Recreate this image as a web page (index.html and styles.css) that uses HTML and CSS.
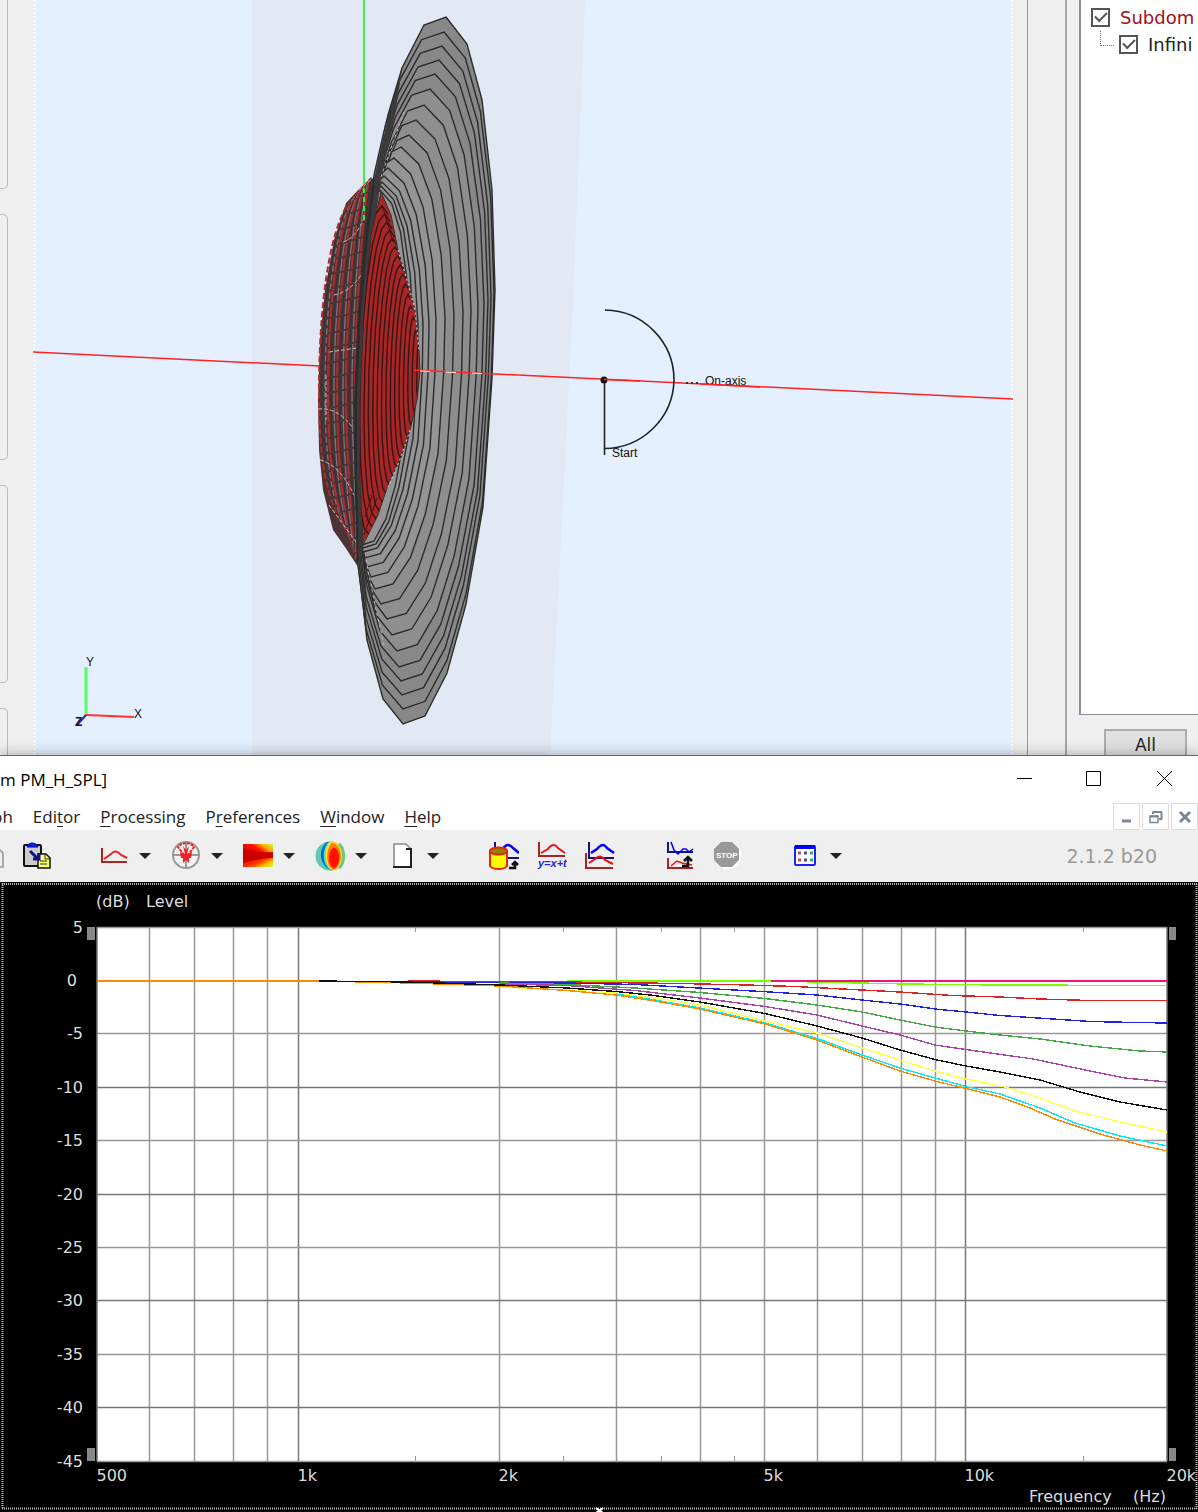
FILE: index.html
```html
<!DOCTYPE html>
<html lang="en">
<head>
  <meta charset="UTF-8" />
  <meta name="viewport" content="width=device-width, initial-scale=1.0"/>
  <title>PM_H_SPL</title>
  <link rel="stylesheet" href="styles.css">
</head>
<body>
  <!-- 3D model window -->
  <div class="model">
    <div class="side">
      <div class="box box-top"></div>
      <div class="box box-tall"></div>
      <div class="box box-mid"></div>
      <div class="box box-last"></div>
    </div>

    <div class="view">
      <svg viewBox="33 0 980 755" role="img" aria-label="3D view">
        <polygon points="252,0 585,0 573,300 550,755 252,755" fill="#e2e8f4"/>
        <path d="M34.500 0V755M1012 0V755" stroke="#fff" stroke-width="1.500" stroke-dasharray="2 2"/>
        <path d="M364 0V190" stroke="#4e4" stroke-width="2"/>
        <path d="M32 352L320 366" stroke="#f22" stroke-width="1.5"/>
        <g id="back"></g>
        <g id="horn"></g>
        <g id="dome"></g>
        <path d="M364 188V220" stroke="#3e3" stroke-width="2" stroke-dasharray="5 4"/>
        <path d="M414 370L1014 399" stroke="#f22" stroke-width="1.5"/>
        <path d="M420 371L492 374" stroke="#fff" stroke-width="1" stroke-dasharray="10 16"/>
        <!-- observation arc -->
        <path d="M605 310A70 70 0 0 1 674 380A70 70 0 0 1 604 448.500M604.500 380V455" fill="none" stroke="#222" stroke-width="1.600"/>
        <circle cx="604" cy="380" r="3.500" fill="#111"/>
        <path d="M604 379.500L640 381" stroke="#f22" stroke-width="1.500"/>
        <path d="M686 383H698" stroke="#333" stroke-width="2" stroke-dasharray="2 3"/>
        <text class="tag" x="612" y="457">Start</text>
        <text class="tag" x="705" y="385">On-axis</text>
        <path d="M700 384L760 387" stroke="#f22" stroke-width="1.500"/>
        <!-- axes -->
        <path d="M86 667V715" stroke="#5f6" stroke-width="3"/>
        <path d="M86 715L134 717" stroke="#f33" stroke-width="2"/>
        <path d="M86 715L77 725" stroke="#22d" stroke-width="2"/>
        <text class="tag" x="86" y="666">Y</text>
        <text class="tag" x="134" y="718">X</text>
        <text class="tag tag-bold" x="75" y="726">Z</text>
      </svg>
    </div>

    <div class="split"></div>

    <div class="panel">
      <div class="tree">
        <label class="node red"><input type="checkbox" checked>Subdom</label>
        <label class="node child"><input type="checkbox" checked>Infini</label>
      </div>
      <button class="all">All</button>
    </div>
  </div>

  <!-- graph window -->
  <div class="window">
    <div class="titlebar">
      <span class="title">m PM_H_SPL]</span>
      <button class="win" aria-label="Minimize"><svg width="16" height="16" viewBox="0 0 16 16"><path d="M1 7.500H16"/></svg></button>
      <button class="win" aria-label="Maximize"><svg width="16" height="16" viewBox="0 0 16 16"><path d="M.5 .5H14.500V14.500H.5Z"/></svg></button>
      <button class="win" aria-label="Close"><svg width="16" height="16" viewBox="0 0 16 16"><path d="M1 0L16 15M16 0L1 15"/></svg></button>
    </div>

    <div class="menubar">
      <nav class="menu">
        <button>ph</button>
        <button>Edi<u>t</u>or</button>
        <button><u>P</u>rocessing</button>
        <button>P<u>r</u>eferences</button>
        <button><u>W</u>indow</button>
        <button><u>H</u>elp</button>
      </nav>
      <div class="mdi">
        <button aria-label="Minimize graph"><svg width="14" height="14" viewBox="0 0 14 14"><path d="M2 11H11" stroke-width="3"/></svg></button>
        <button aria-label="Restore graph"><svg width="14" height="14" viewBox="0 0 14 14"><path d="M1 6H9V12.500H1Z" stroke-width="1.500"/><path d="M1 6.500H9M4 2H13M4 4V1.500M12.500 2V9H10" stroke-width="2"/></svg></button>
        <button aria-label="Close graph"><svg width="14" height="14" viewBox="0 0 14 14"><path d="M2 2L12 12M12 2L2 12" stroke-width="3"/></svg></button>
      </div>
    </div>

    <div class="toolbar">
      <button class="tool" aria-label="Copy">
        <svg width="30" height="30" viewBox="0 0 30 30"><path d="M20 9H26L29 12V26H20Z" fill="#eee" stroke="#aaa" stroke-width="2"/><path d="M24 14V22" stroke="#aaa" stroke-width="2"/></svg>
      </button>
      <button class="tool" aria-label="Paste">
        <svg width="30" height="30" viewBox="0 0 30 30">
          <rect x="2" y="4" width="17" height="21" rx="1" fill="#ccc" stroke="#111" stroke-width="2"/>
          <path d="M5 6C6 3 8 2 10 2S15 3 16 6Z" fill="#02f" stroke="#00a"/>
          <path d="M16 13H24L28 17V27H16Z" fill="#ff6" stroke="#111" stroke-width="1.500"/>
          <path d="M23 13V18H28M18 20H25M18 23H25" fill="none" stroke="#333"/>
          <path d="M8 10L16 18M11 18H17V12" fill="none" stroke="#118" stroke-width="3"/>
        </svg>
      </button>
      <span class="sep sep-a"></span>
      <button class="tool drop" aria-label="Level graph">
        <svg width="30" height="30" viewBox="0 0 30 30"><path d="M3 7V21H28" fill="none" stroke="#a22" stroke-width="2"/><path d="M5 18L12 13C15 9 19 10 22 14L28 17" fill="none" stroke="#e22" stroke-width="2"/></svg>
        <svg class="arrow" width="12" height="8" viewBox="0 0 12 8"><path d="M0 1H12L6 7Z"/></svg>
      </button>
      <button class="tool drop" aria-label="Polar graph">
        <svg width="30" height="30" viewBox="0 0 30 30">
          <circle cx="15" cy="14" r="13" fill="#f4f4f4" stroke="#999" stroke-width="2"/>
          <path d="M15 0V28M1 14H29" stroke="#999" stroke-width="2"/>
          <path d="M13 14L7 6C10 1 20 1 23 6L17 14" fill="none" stroke="#e22" stroke-width="2" stroke-dasharray="3 1"/>
          <path d="M9 11L14 13L12 5L15 9L18 5L16 13L21 11L20 17L18 17L18 22L15 19L12 22L12 17L10 17Z" fill="#e22"/>
        </svg>
        <svg class="arrow" width="12" height="8" viewBox="0 0 12 8"><path d="M0 1H12L6 7Z"/></svg>
      </button>
      <button class="tool drop" aria-label="Contour graph">
        <svg width="30" height="30" viewBox="0 0 30 30">
          <defs>
            <linearGradient id="heat" x1="0" y1=".6" x2="1" y2="0"><stop offset="0" stop-color="#d00"/><stop offset=".45" stop-color="#f10"/><stop offset=".7" stop-color="#fa0"/><stop offset="1" stop-color="#bf4"/></linearGradient>
            <linearGradient id="heat2" x1="0" y1=".2" x2="1" y2="1"><stop offset="0" stop-color="#d00"/><stop offset=".5" stop-color="#f30"/><stop offset=".75" stop-color="#fb0"/><stop offset="1" stop-color="#cf4"/></linearGradient>
          </defs>
          <rect y="3" width="30" height="12" fill="url(#heat)"/>
          <rect y="14" width="30" height="12" fill="url(#heat2)"/>
          <path d="M0 7C8 9 16 12 30 11V17C18 17 10 20 0 22Z" fill="#c00"/>
        </svg>
        <svg class="arrow" width="12" height="8" viewBox="0 0 12 8"><path d="M0 1H12L6 7Z"/></svg>
      </button>
      <button class="tool drop" aria-label="Balloon graph">
        <svg width="30" height="30" viewBox="0 0 30 30">
          <circle cx="15" cy="15" r="14.500" fill="#5ec9b4"/>
          <path d="M12 1A14.500 14.500 0 0 1 16 29.500C4 24 3 8 12 1Z" fill="#06c"/>
          <path d="M14 .5A14.500 14.500 0 0 1 16 29.500C7 24 6 8 14 .5Z" fill="#4dc"/>
          <path d="M15 .5A14.500 14.500 0 0 1 17 29.500C9 24 8 8 15 .5Z" fill="#fd2"/>
          <path d="M17 2C29 4 28 26 18 29C10 24 11 7 17 2Z" fill="#f70"/>
          <ellipse cx="19" cy="17" rx="5" ry="10" fill="#f10"/>
          <path d="M24 3C30 8 30 22 24 27" fill="none" stroke="#6c8" stroke-width="3"/>
        </svg>
        <svg class="arrow" width="12" height="8" viewBox="0 0 12 8"><path d="M0 1H12L6 7Z"/></svg>
      </button>
      <button class="tool drop" aria-label="New page">
        <svg width="30" height="30" viewBox="0 0 30 30"><path d="M7 3H19L24 8V26H7Z" fill="#fff"/><path d="M7 26V3H19L24 8" fill="none" stroke="#888" stroke-width="1.500"/><path d="M6 26H24V8H19" fill="none" stroke="#222" stroke-width="2"/></svg>
        <svg class="arrow" width="12" height="8" viewBox="0 0 12 8"><path d="M0 1H12L6 7Z"/></svg>
      </button>
      <span class="sep sep-b"></span>
      <button class="tool" aria-label="Store curves">
        <svg width="30" height="30" viewBox="0 0 30 30">
          <path d="M6 1V17H30" fill="none" stroke="#118" stroke-width="2"/>
          <path d="M12 10C17 3 20 2 24 7L30 12" fill="none" stroke="#00e" stroke-width="2.500"/>
          <path d="M1 10V25C4 29 15 29 18 25V10Z" fill="#ff0" stroke="#e20" stroke-width="2"/>
          <ellipse cx="9.500" cy="10" rx="8.500" ry="3.500" fill="#880" stroke="#e20" stroke-width="2"/>
          <path d="M20 27H26V21M23 24L26 21L29 24" fill="none" stroke="#111" stroke-width="2.500"/>
        </svg>
      </button>
      <button class="tool" aria-label="Formula">
        <svg width="30" height="30" viewBox="0 0 30 30">
          <path d="M2 1V15H28" fill="none" stroke="#a22" stroke-width="2"/>
          <path d="M4 12L11 8C14 3 18 3 21 7L28 12" fill="none" stroke="#e11" stroke-width="2"/>
          <text x="1" y="26" class="formula">y=x+t</text>
        </svg>
      </button>
      <button class="tool" aria-label="Overlay curves">
        <svg width="30" height="30" viewBox="0 0 30 30">
          <path d="M4 1V17H29" fill="none" stroke="#118" stroke-width="2"/>
          <path d="M6 12L12 8C16 3 19 3 22 7L29 12" fill="none" stroke="#00e" stroke-width="2.500"/>
          <path d="M1 12V27H28" fill="none" stroke="#a22" stroke-width="2"/>
          <path d="M4 22L10 18C14 14 17 15 20 19L28 23" fill="none" stroke="#e11" stroke-width="2"/>
        </svg>
      </button>
      <span class="sep sep-c"></span>
      <button class="tool" aria-label="Transform">
        <svg width="30" height="30" viewBox="0 0 30 30">
          <path d="M3 1V11H28" fill="none" stroke="#118" stroke-width="2"/>
          <path d="M6 1L9 9L13 13L18 8H21L24 11L28 8" fill="none" stroke="#00e" stroke-width="1.500"/>
          <path d="M3 17V27H28" fill="none" stroke="#a22" stroke-width="2"/>
          <path d="M6 25L12 20L17 22L27 24" fill="none" stroke="#e11" stroke-width="1.500"/>
          <path d="M17 25H23V16M19 20L23 16L27 20" fill="none" stroke="#111" stroke-width="2.500"/>
        </svg>
      </button>
      <button class="tool" aria-label="Stop">
        <svg width="30" height="30" viewBox="0 0 30 30">
          <path d="M10 3H20L28 10V20L20 28H10Z" fill="#fff"/>
          <path d="M8 1H19L26 8V19L19 26H8L1 19V8Z" fill="#999"/>
          <text x="3" y="17" class="stop">STOP</text>
        </svg>
      </button>
      <span class="sep sep-d"></span>
      <button class="tool drop" aria-label="Layout">
        <svg width="30" height="30" viewBox="0 0 30 30">
          <rect x="5" y="5" width="20" height="19" rx="1" fill="#fff" stroke="#22e" stroke-width="2"/>
          <path d="M5 6H25" stroke="#00f" stroke-width="4"/>
          <path d="M8 12H11M8 19H11" stroke="#a56" stroke-width="3"/>
          <path d="M14 12H17M14 19H17" stroke="#648" stroke-width="3"/>
          <path d="M20 12H23M20 19H23" stroke="#3a8" stroke-width="3"/>
        </svg>
        <svg class="arrow" width="12" height="8" viewBox="0 0 12 8"><path d="M0 1H12L6 7Z"/></svg>
      </button>
      <span class="version">2.1.2 b20</span>
    </div>

    <div class="chart">
      <svg viewBox="0 882 1198 630" role="img" aria-label="Level over frequency">
        <path class="focus" d="M2 884H1198M2.500 883V1509M1196.500 884V1509M2 1508.500H1198"/>
        <rect x="97" y="927" width="1070" height="534" fill="#fff"/>
        <g id="grid"></g>
        <g id="curves"></g>
        <path d="M87 927H95V940H87ZM1169 927H1176V940H1169ZM87 1448H95V1461H87ZM1169 1448H1176V1461H1169Z" fill="#888"/>
        <g id="labels"></g>
        <text x="96" y="907">(dB)</text>
        <text x="146" y="907">Level</text>
        <text x="1029" y="1502">Frequency</text>
        <text x="1166" y="1502" text-anchor="end">(Hz)</text>
        <path d="M596 1508L603 1513M603 1508L596 1513" stroke="#fff" stroke-width="2"/>
      </svg>
    </div>
  </div>

  <script src="script.js"></script>
</body>
</html>
```

FILE: styles.css
```css
html, body {
  margin: 0;
  padding: 0;
  background: #efefef;
  color: #222;
  font-family: "Open Sans", "Noto Sans", sans-serif;
  font-size: 17px;
}

body {
  overflow: hidden;
}

button {
  font: inherit;
  color: inherit;
  background: none;
  border: none;
  margin: 0;
  padding: 0;
}

svg {
  display: block;
}

/* model window */
.model {
  display: flex;
}

.side {
  width: 33px;
  display: flex;
  flex-direction: column;
  gap: 25px;
}

.box {
  box-sizing: border-box;
  width: 8px;
  border: 1px solid #bbb;
  border-left: none;
  border-radius: 0 5px 5px 0;
}

.box-top {
  height: 189px;
  border-top: none;
  border-top-right-radius: 0;
}

.box-tall {
  height: 246px;
}

.box-mid {
  height: 198px;
}

.box-last {
  flex: 1;
  border-bottom: none;
  border-bottom-right-radius: 0;
}

.view {
  flex: 1;
  background: #e4f0ff;
}

.view svg {
  width: 100%;
  height: auto;
}

.tag {
  font-family: "Liberation Sans", Arial, sans-serif;
  font-size: 12px;
  fill: #111;
}

.tag-bold {
  font-weight: bold;
}

.split {
  box-sizing: border-box;
  width: 40px;
  margin-left: 14px;
  border-left: 1px solid #999;
  border-right: 2px solid #a4a8ac;
}

.panel {
  width: 119px;
  margin-left: 12px;
  display: flex;
  flex-direction: column;
  overflow: hidden;
}

.tree {
  flex: 1;
  background: #fff;
  border-left: 2px solid #888c94;
  border-bottom: 1px solid #888c94;
  padding: 4px 0 0 10px;
  font-family: "DejaVu Sans", Verdana, sans-serif;
  font-size: 18px;
}

.node {
  display: flex;
  align-items: center;
  gap: 10px;
  height: 27px;
  white-space: nowrap;
}

.node.red {
  color: #a01020;
}

.node.child {
  position: relative;
  padding-left: 28px;
}

.node.child::before {
  content: "";
  position: absolute;
  left: 9px;
  top: 0;
  width: 13px;
  height: 14px;
  border-left: 1px dotted #777;
  border-bottom: 1px dotted #777;
}

.node input {
  appearance: none;
  flex: none;
  box-sizing: border-box;
  width: 19px;
  height: 19px;
  margin: 0;
  border: 2px solid #555;
  background: #fff;
}

.node input:checked::after {
  content: "";
  display: block;
  width: 10px;
  height: 5px;
  margin: 2px 0 0 2px;
  border-left: 2px solid #555;
  border-bottom: 2px solid #555;
  transform: rotate(-45deg);
}

.all {
  height: 26px;
  width: 83px;
  margin: 14px 0 0 25px;
  background: #e1e1e1;
  border: 2px solid #adadad;
  border-bottom: none;
  padding-top: 4px;
  font-family: "DejaVu Sans", Verdana, sans-serif;
  line-height: 20px;
}

/* graph window */
.window {
  position: relative;
  background: #fff;
  border-top: 1px solid #666;
  box-shadow: 0 -2px 12px rgba(0, 0, 0, .25);
}

.titlebar {
  display: flex;
  align-items: center;
  height: 46px;
  margin-right: -1px;
}

.title {
  flex: 1;
  color: #000;
}

.win {
  width: 70px;
  height: 46px;
  display: flex;
  align-items: center;
  justify-content: center;
}

.win path {
  fill: none;
  stroke: #000;
}

.menubar {
  display: flex;
  justify-content: space-between;
  height: 28px;
}

.menu {
  display: flex;
  align-items: center;
  gap: 20px;
  margin-left: -8px;
}

.menu u {
  text-underline-offset: 3px;
}

.mdi {
  display: flex;
  gap: 2px;
  padding-top: 1px;
}

.mdi button {
  box-sizing: border-box;
  width: 27px;
  height: 27px;
  border: 1px solid #ddd;
  display: flex;
  align-items: center;
  justify-content: center;
}

.mdi path {
  fill: none;
  stroke: #789;
}

.toolbar {
  display: flex;
  align-items: center;
  height: 52px;
  background: #efefef;
  padding-left: 13px;
}

.tool {
  flex: none;
  width: 48px;
  height: 48px;
  display: flex;
  align-items: center;
  justify-content: center;
}

.tool:first-child {
  margin-left: -48px;
}

.tool.drop {
  width: 72px;
  justify-content: flex-start;
  gap: 10px;
  padding-left: 6px;
}

.arrow {
  fill: #222;
}

.sep {
  width: 32px;
}

.sep-b {
  width: 27px;
}

.formula {
  font-family: "Liberation Sans", Arial, sans-serif;
  font-size: 11px;
  font-style: italic;
  font-weight: bold;
  fill: #22e;
}

.stop {
  font-family: "Liberation Sans", Arial, sans-serif;
  font-size: 8px;
  font-weight: bold;
  fill: #fff;
}

.version {
  margin-left: auto;
  margin-right: 41px;
  color: #999;
  font-family: "DejaVu Sans", Verdana, sans-serif;
  font-size: 19px;
}

.chart {
  background: #000;
}

.chart svg {
  width: 100%;
  height: auto;
}

.chart text {
  font-family: "DejaVu Sans", Verdana, sans-serif;
  font-size: 16px;
  fill: #ddd;
}

.focus {
  stroke: #bbb;
  stroke-width: 2;
  stroke-dasharray: 1 1;
  fill: none;
}
```

FILE: script.js
```js
const NS = "http://www.w3.org/2000/svg";

function add(parent, name, attrs, text) {
  const el = document.createElementNS(NS, name);
  for (const k in attrs) el.setAttribute(k, attrs[k]);
  if (text) el.textContent = text;
  document.getElementById(parent).appendChild(el);
}

// ---------- horn ----------
const rim = [
  [446, 17], [467, 44], [482, 100], [492, 190], [495, 290], [492, 378], [483, 507],
  [466, 604], [447, 673], [425, 716], [403, 724], [383, 699], [367, 640], [359, 570],
  [357, 480], [357, 400], [361, 310], [368, 235], [377, 165], [388, 115], [402, 68], [424, 25]
];

// top point, bottom point and right edge of every ring
const rings = [
  [446, 17, 403, 724, 495], [444, 32, 403, 709, 494], [442, 46, 402, 695, 491],
  [439, 60, 401, 681, 488], [435, 74, 399, 667, 484], [430, 89, 397, 651, 478],
  [424, 105, 392, 635, 471], [416, 120, 387, 619, 463], [409, 135, 381, 604, 454],
  [401, 147, 375, 589, 445], [394, 158, 371, 577, 436], [388, 168, 367, 567, 429],
  [384, 176, 365, 558, 423], [382, 182, 363, 552, 418], [381, 186, 363, 548, 413],
  [380, 190, 362, 545, 409]
];

rings.forEach((r, i) => {
  const [tx, ty, bx, by, right] = r;
  const pts = rim.map(([x, y]) => {
    const k = (y - 17) / 707;
    const axis = 446 - 43 * k;
    const t = (x - axis) / (x > axis ? 65.6 : 63);
    const mid = tx + (bx - tx) * 0.386;
    const half = x > axis ? right - mid : (tx + bx) / 2 - 359 - i * 0.3;
    return [(tx + (bx - tx) * k + t * half).toFixed(1), (ty + (by - ty) * k).toFixed(1)];
  });
  add("horn", "polygon", {
    points: i ? pts.join(" ") : rim.join(" "),
    fill: i < 5 ? "#888" : i < 9 ? "#8e8e8e" : "#949494",
    stroke: "#2c2c2c", "stroke-width": 1.4
  });
});
add("horn", "path", {
  d: "M402 70L388 117L377 167L368 237L361 312L357 400V480L359 570L363 545L361 480L361 400L366 310L373 235L381 180L388 145L396 108Z",
  fill: "#3a3a3a"
});
add("horn", "path", { d: "M404 112L392 145L380 180M366 560L376 610L384 645", stroke: "#bbb", "stroke-dasharray": "3 3", fill: "none" });

// ---------- dome ----------
const domeShape = "M381 192L391 215L398 250L408 283L415 310L419 350L420 372L417 400L410 430L401 457L388 485L378 515L363 545L360 480V400L364 310L371 235Z";
add("dome", "clipPath", { id: "domeClip" });
const clip = document.createElementNS(NS, "path");
clip.setAttribute("d", domeShape);
document.getElementById("domeClip").appendChild(clip);
add("dome", "path", { d: domeShape, fill: "#a82626", stroke: "#333" });
// only the side of each ring that faces the viewer
for (let n = 0; n < 15; n++) {
  const f = 1 - n / 15;
  const fy = Math.pow(f, 0.7);
  const pts = [];
  for (let a = 9; a < 22; a++) {
    const th = a * Math.PI / 10;
    const x = 376 + 20 * Math.sin(th) + 6 * Math.cos(th);
    const y = -165 * Math.cos(th);
    pts.push([(421 + (x - 421) * f).toFixed(1), (371 + y * fy).toFixed(1)]);
  }
  add("dome", "polyline", {
    points: pts.join(" "), fill: "none", stroke: "#3c1616", "stroke-width": 1.5,
    "clip-path": "url(#domeClip)"
  });
}
add("dome", "path", { d: "M382 205L393 242M364 535L377 498M365 517L372 495", stroke: "#411", fill: "none" });
add("dome", "path", { d: "M398 250L408 283L415 310L419 350M410 430L401 457L388 487", stroke: "#ddd", "stroke-dasharray": "2 3", fill: "none" });

// ---------- rear side ----------
add("back", "path", {
  d: "M380 172L360 188L346 203L334 240L325 290L320 340L318 400L319 450L323 490L333 530L345 547L360 570L372 400Z",
  fill: "#4c3436"
});
for (let n = 0; n < 14; n++) {
  const x = 319 + n * 3;
  const top = 205 - n * 1.2;
  const bot = 530 + n * 2;
  add("back", "path", {
    d: `M${358 + n} ${top - 12}C${x + 8} ${top + 10} ${x} 320 ${x} 390S${x + 6} ${bot - 30} ${350 + n / 2} ${bot + 6}`,
    fill: "none",
    stroke: ["#b02a30", "#333", "#777"][n % 3],
    "stroke-width": n % 3 == 0 ? 2 : 1.3,
    "stroke-dasharray": n < 3 ? "6 3" : "13 2"
  });
}
add("back", "path", {
  d: "M343 242Q356 238 364 218M334 295Q351 292 363 272M329 352L357 348M318 409Q338 407 353 428M320 460Q340 465 354 495M329 505L356 542M326 375V420M380 172L359 190",
  fill: "none", stroke: "#bbb", "stroke-dasharray": "4 2"
});

// ---------- graph ----------
const fx = f => Math.round(96.5 + 667.9 * Math.log10(f / 500)) + 0.5;
const ly = db => Math.floor(927 + (5 - db) * 10.68) + 0.5;

[600, 700, 800, 900, 1000, 2000, 3000, 4000, 5000, 6000, 7000, 8000, 9000, 10000].forEach(f => {
  const main = f == 1000 || f == 10000;
  add("grid", "path", { d: `M${fx(f)} 927V1461`, stroke: main ? "#777" : "#999", "stroke-width": 1.5 });
});
[1500, 2500, 3500, 4500, 15000].forEach(f => {
  add("grid", "path", { d: `M${fx(f)} 927V932M${fx(f)} 1456V1461`, stroke: "#999" });
});
for (let db = 5; db >= -45; db -= 5) {
  // the 0 dB line is covered by the curves
  if (db) add("grid", "path", { d: `M97 ${ly(db)}H1167`, stroke: db % 10 ? "#999" : "#777", "stroke-width": 1.5 });
  add("labels", "text", { x: db ? 83 : 77, y: ly(db) + 5, "text-anchor": "end" }, String(db));
}
add("grid", "path", { d: "M97 927V1461M1167 927V1461", stroke: "#777", "stroke-width": 1.5 });

[[500, "500"], [1000, "1k"], [2000, "2k"], [5000, "5k"], [10000, "10k"], [20000, "20k"]].forEach(([f, t]) => {
  add("labels", "text", { x: fx(f) - 1, y: 1481 }, t);
});

const curves = [
  ["#7f0", "567,981 770,981 860,983 906,984 997,985 1167,985.5"],
  ["#f0147a", "771,981 1167,981"],
  ["#d22", "408,981 567,982 680,983.5 747,985 795,986.5 862,990 900,992 952,995.5 1000,997 1040,999 1090,1000.5 1167,1000.5"],
  ["#22d", "408,982 567,983 635,984.5 680,987 725,989.5 770,992 817,995 862,1000 900,1004 935,1009 966,1012 1000,1015.5 1045,1018.5 1090,1021.5 1135,1022.5 1167,1023"],
  ["#4a4", "500,983 567,984.5 635,988 700,992.5 765,998.5 817,1005 862,1012 900,1020 935,1027 966,1031 1000,1035 1040,1039 1090,1046 1140,1051 1167,1052"],
  ["#a4a", "500,984 567,985.5 635,990.5 700,998 765,1006.5 817,1015 862,1026 900,1035 935,1045 966,1049.5 1033,1059 1090,1071 1125,1078 1167,1082"],
  ["#ff4", "500,987 567,990 616,993 655,998 700,1005 765,1021 817,1033 862,1048 900,1060 935,1071 966,1079 1005,1087 1040,1098 1075,1111 1120,1122 1167,1132"],
  ["#0ee", "616,994 655,1000 700,1008 765,1023 817,1038.5 862,1055 900,1068 935,1078 966,1086.5 1000,1094 1040,1108 1075,1123 1120,1136 1167,1146"],
  ["#f80", "97,981 319,981 408,983 500,986 567,990.5 616,995 655,1001 700,1009 765,1024 817,1040 862,1057 900,1071 935,1081 966,1088.5 1000,1097 1030,1108 1055,1119 1100,1134 1140,1145 1167,1151"],
  ["#111", "319,981 408,982 500,985 567,988 616,991.5 650,995 700,1002 765,1013.5 817,1026 862,1038 900,1050 935,1059.5 966,1066 1000,1072 1040,1080 1080,1092 1120,1102 1167,1110"]
];
// crisp edges give the curves the plotter's pixel steps
curves.forEach(([color, points]) => {
  add("curves", "polyline", {
    points, fill: "none", stroke: color, "stroke-width": 1.4, "shape-rendering": "crispEdges"
  });
});
```
